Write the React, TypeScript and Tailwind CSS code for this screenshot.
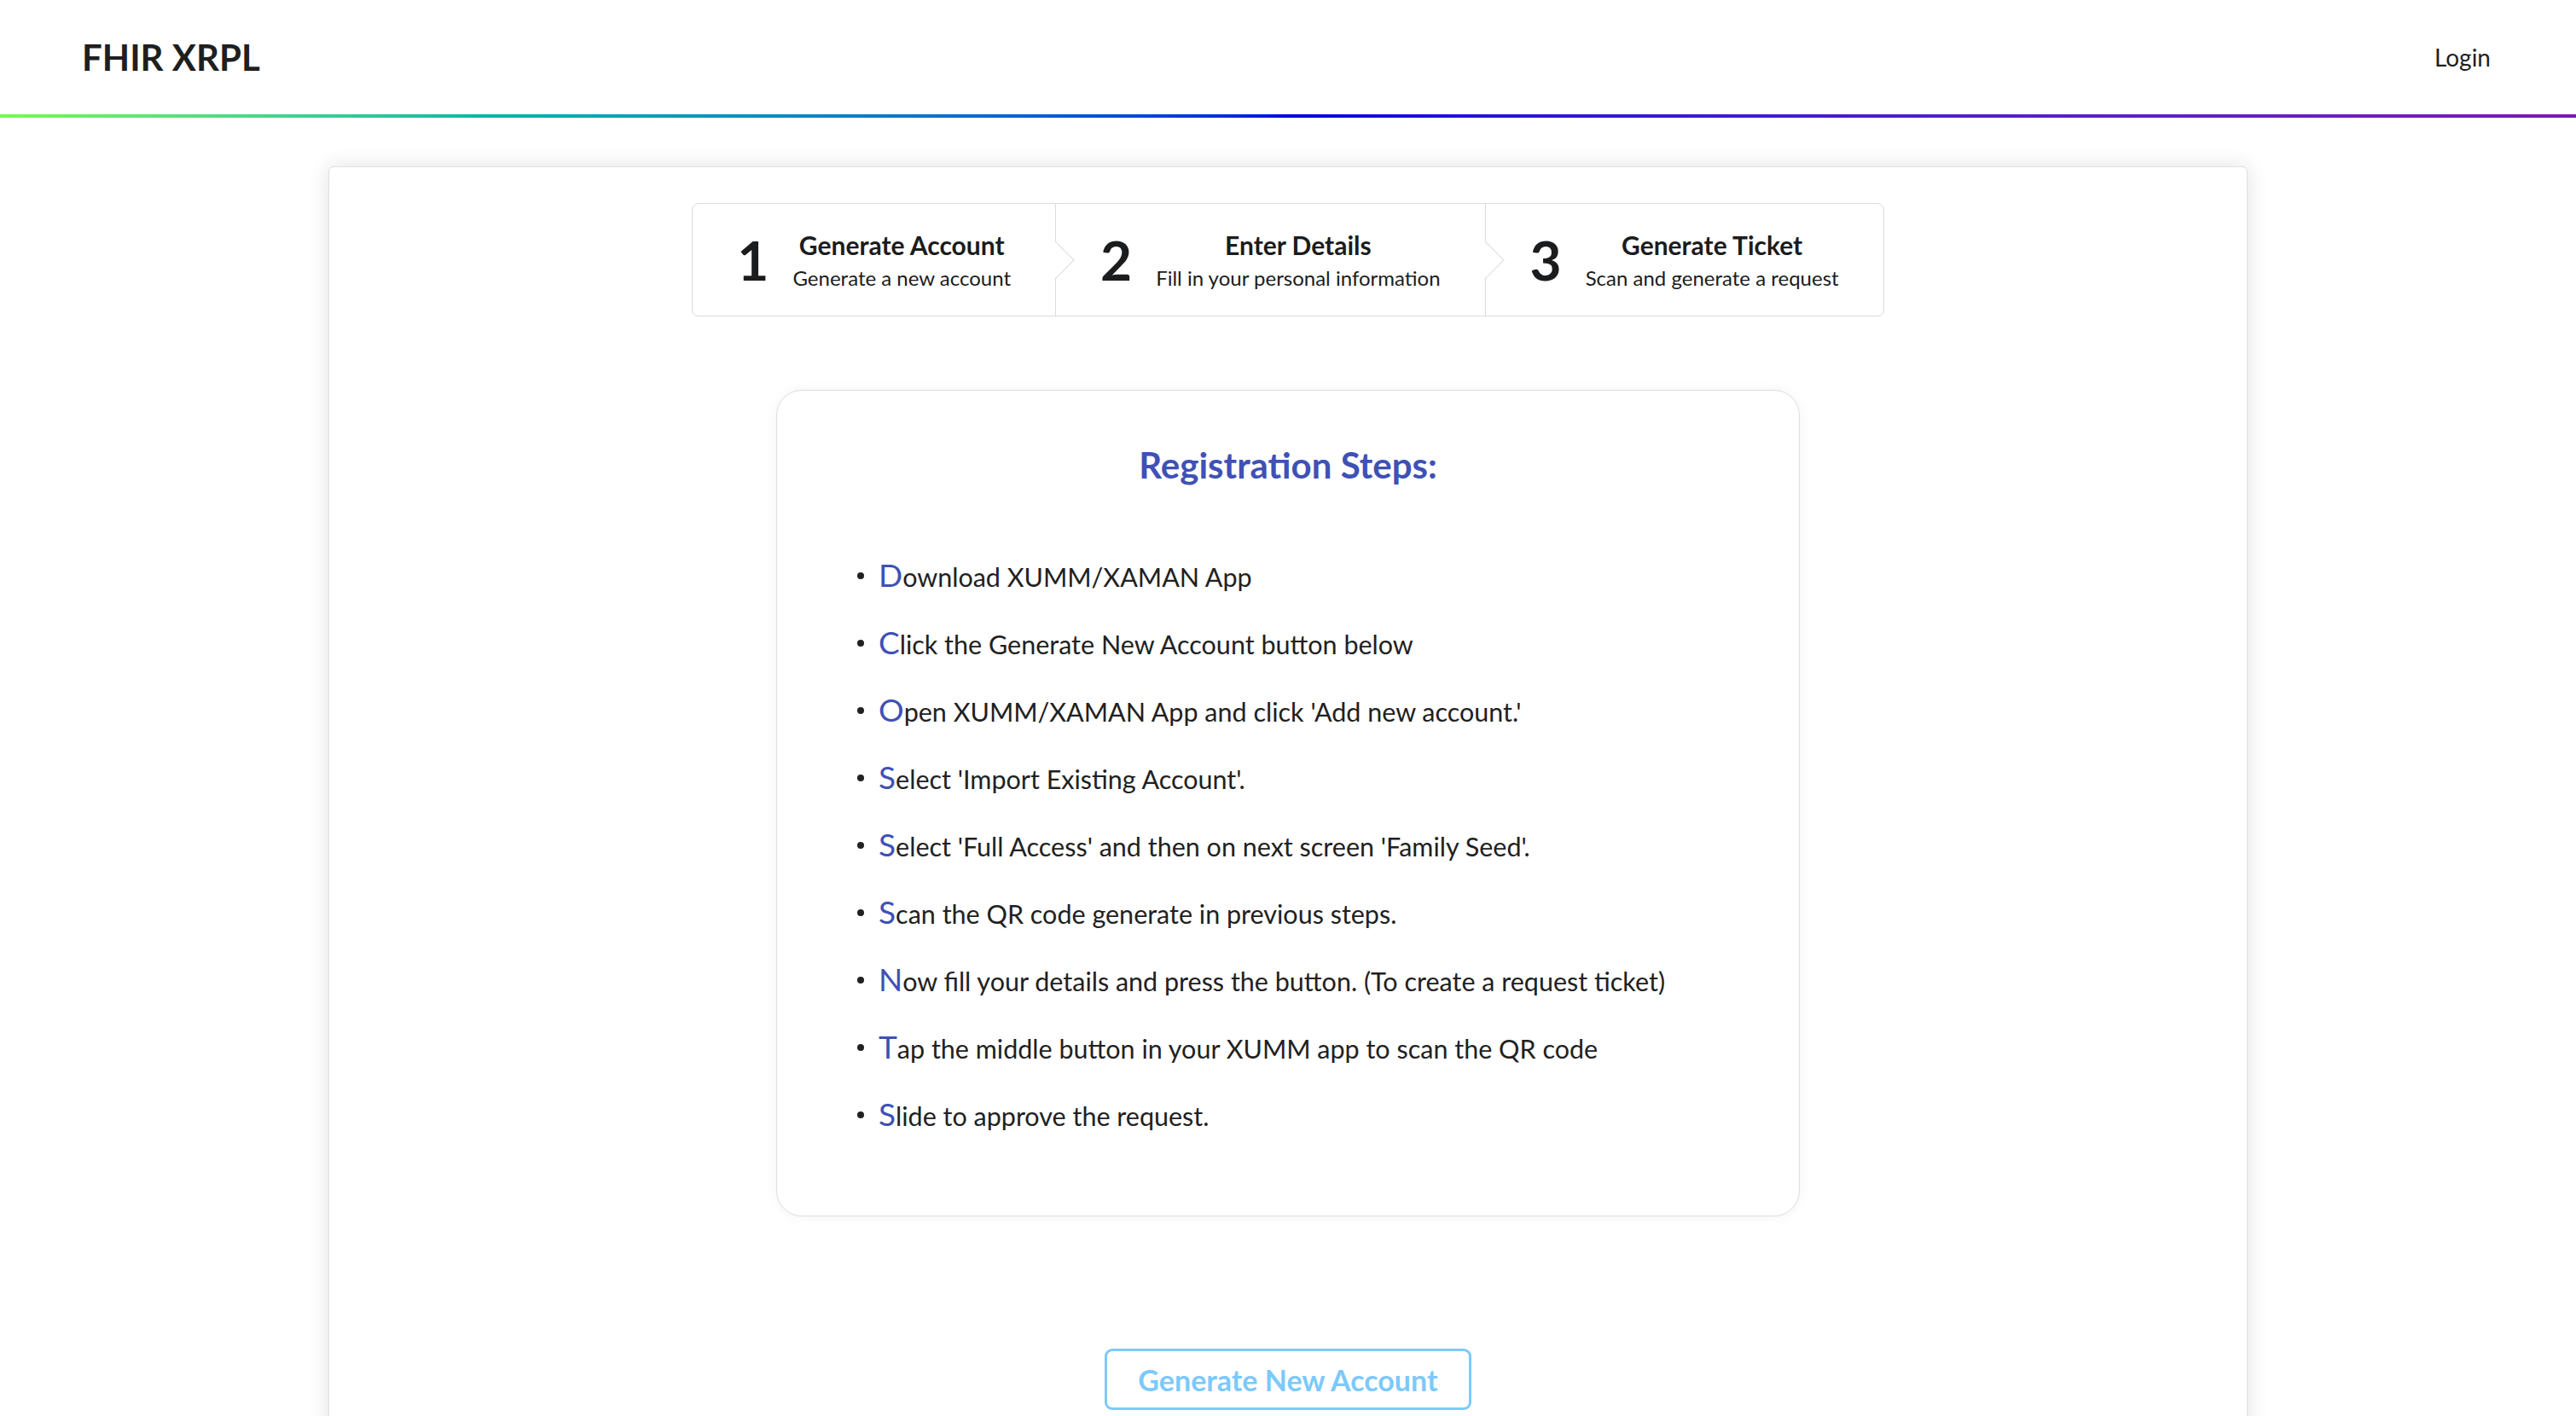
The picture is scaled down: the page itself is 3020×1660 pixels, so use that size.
import React from 'react'

const steps = [
  { num: '1', title: 'Generate Account', desc: 'Generate a new account' },
  { num: '2', title: 'Enter Details', desc: 'Fill in your personal information' },
  { num: '3', title: 'Generate Ticket', desc: 'Scan and generate a request' },
]

const items = [
  'Download XUMM/XAMAN App',
  'Click the Generate New Account button below',
  "Open XUMM/XAMAN App and click 'Add new account.'",
  "Select 'Import Existing Account'.",
  "Select 'Full Access' and then on next screen 'Family Seed'.",
  'Scan the QR code generate in previous steps.',
  'Now fill your details and press the button. (To create a request ticket)',
  'Tap the middle button in your XUMM app to scan the QR code',
  'Slide to approve the request.',
]

function Steps() {
  return (
    <div className="mx-auto flex w-fit rounded-[8px] border border-[#dcdcdd] bg-white">
      {steps.map((s, i) => (
        <div
          key={s.num}
          className={`relative flex items-center px-[52px] py-[30px] ${i > 0 ? 'border-l border-[#dcdcdd]' : ''}`}
        >
          <span className="mr-[28px] text-[64px] font-bold leading-none text-[#1b1c1d]">{s.num}</span>
          <div className="text-center">
            <div className="text-[30px] font-bold leading-[36px] text-[#1b1c1d]">{s.title}</div>
            <div className="mt-[6px] text-[24px] leading-[29px] text-[#1b1c1d]">{s.desc}</div>
          </div>
          {i < steps.length - 1 && (
            <span className="absolute right-0 top-1/2 z-10 h-[32px] w-[32px] translate-x-1/2 -translate-y-1/2 -rotate-45 border-b border-r border-[#dcdcdd] bg-white" />
          )}
        </div>
      ))}
    </div>
  )
}

function RegistrationCard() {
  return (
    <div className="mx-auto mt-[86px] w-[1200px] rounded-[30px] border border-[#dedede] bg-white pb-[98px] pt-[62px] shadow-[0_0_14px_rgba(0,0,0,0.05)]">
      <h2 className="text-center text-[42px] font-bold leading-[50px] text-[#3f51b5]">Registration Steps:</h2>
      <ul className="mt-[85px] flex flex-col gap-[39px] pl-[94px]">
        {items.map((t) => (
          <li key={t} className="flex h-[40px] items-center text-[30.5px] leading-[40px] text-[#212121]">
            <span className="mr-[17px] h-[8px] w-[8px] shrink-0 rounded-full bg-[#212121]" />
            <span className="whitespace-nowrap">
              <span className="text-[37px] leading-[40px] text-[#3f51b5]">{t[0]}</span>
              {t.slice(1)}
            </span>
          </li>
        ))}
      </ul>
    </div>
  )
}

export default function App() {
  return (
    <div className="min-h-screen bg-white font-['Lato','Liberation_Sans',sans-serif]">
      <header className="flex h-[134px] items-center justify-between pl-[96px] pr-[100px]">
        <div className="text-[42px] font-bold text-[#1f1f1f]">FHIR XRPL</div>
        <div className="text-[28px] text-[#1f1f1f]">Login</div>
      </header>
      <div className="h-[4px] bg-gradient-to-r from-[#76f94a] via-[#0000e0] to-[#7c17b6]" />

      <main className="mx-auto mt-[57px] min-h-[1600px] w-[2250px] rounded-[6px] border border-[#e0e0e0] bg-white pt-[42px] shadow-[0_0_24px_rgba(0,0,0,0.12)]">
        <Steps />
        <RegistrationCard />
        <div className="mt-[155px] flex justify-center">
          <button className="h-[72px] w-[430px] rounded-[9px] border-[3px] border-[#7cc9fb] bg-white text-[34px] font-bold text-[#7cc9fb]">
            Generate New Account
          </button>
        </div>
      </main>
    </div>
  )
}
